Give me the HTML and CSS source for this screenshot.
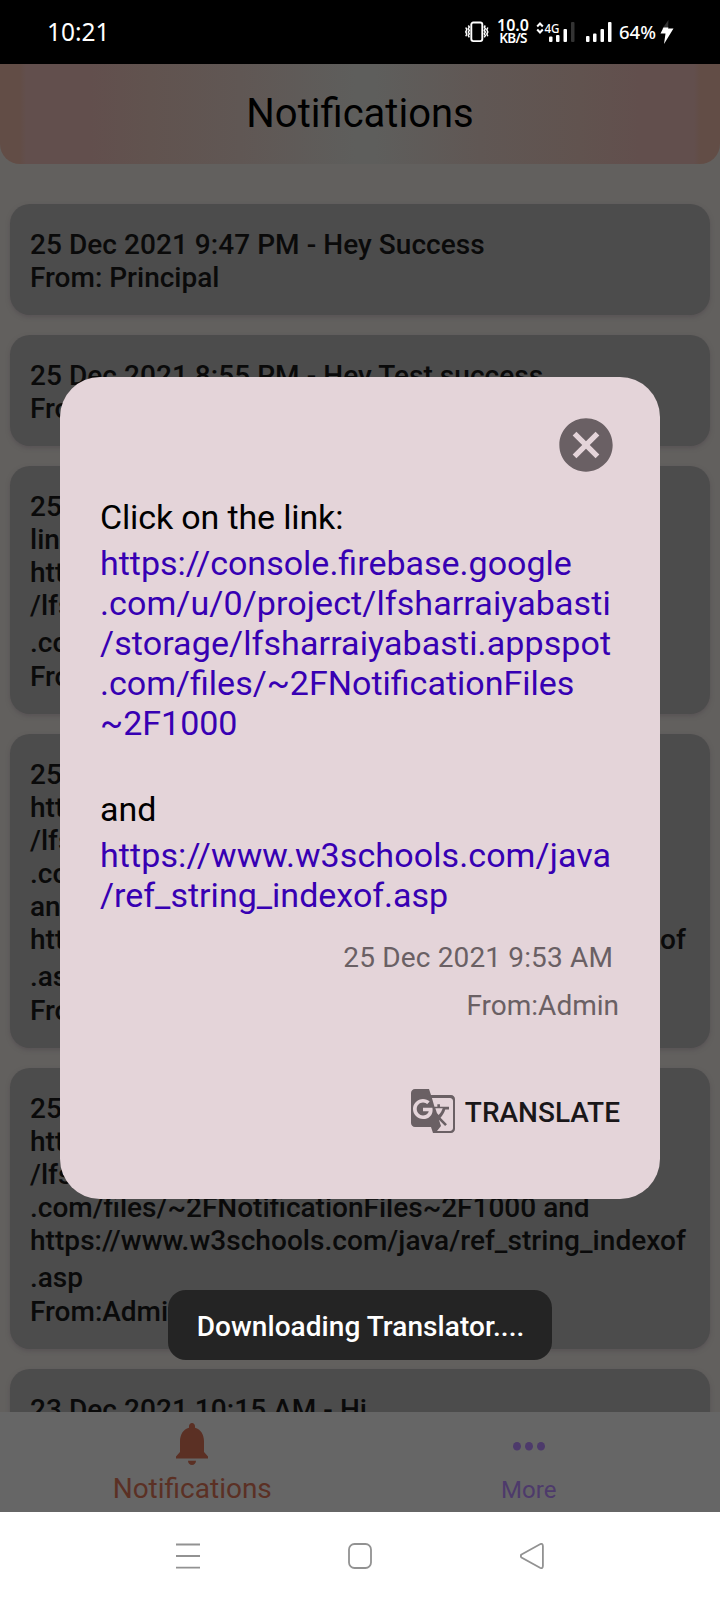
FILE: index.html
```html
<!DOCTYPE html>
<html lang="en">
<head>
<meta charset="utf-8">
<title>Notifications</title>
<link rel="stylesheet" href="styles.css">
</head>
<body>
<div class="phone">
  <div class="status">
    <span class="time">10:21</span>
    <div class="status-icons">
      <svg class="vibrate" width="24" height="22" viewBox="0 0 24 22" fill="none" stroke="#fff">
        <rect x="6.300" y="1.500" width="11" height="18.600" rx="2" stroke-width="1.900"/>
        <path stroke-width="1.500" d="M3.300 4.500l1 1.500-1 1.700 1 1.700-1 1.700 1 1.700-1 1.700 1 1.800M.8 6.500l1 2.200-1 2.200 1 2.200-1 2.200M20.300 4.500l-1 1.500 1 1.700-1 1.700 1 1.700-1 1.700 1 1.700-1 1.800M22.800 6.500l-1 2.200 1 2.200-1 2.200 1 2.200"/>
      </svg>
      <div class="speed"><span class="rate">10.0</span><span class="unit">KB/S</span></div>
      <svg class="sim1" width="40" height="22" viewBox="0 0 40 22">
        <path d="M1.200 5.500L4 2.500l2.800 3M1.200 8.500l2.800 3 2.800-3" fill="none" stroke="#fff" stroke-width="2"/>
        <text class="net" x="8.500" y="12" textLength="15" lengthAdjust="spacingAndGlyphs">4G</text>
        <g fill="#fff"><rect x="13" y="15.500" width="3.500" height="5.500" rx="1"/><rect x="20" y="14" width="3.500" height="7" rx="1"/><rect x="27.500" y="8" width="3.500" height="13" rx="1"/><rect x="35" y="1" width="3.500" height="20" rx="1" opacity=".2"/></g>
      </svg>
      <svg class="sim2" width="28" height="22" viewBox="0 0 28 22" fill="#fff">
        <rect x="1" y="15" width="3.500" height="6" rx="1"/><rect x="8" y="12.500" width="3.500" height="8.500" rx="1"/><rect x="15.500" y="8" width="3.500" height="13" rx="1"/><rect x="23" y="1" width="3.500" height="20" rx="1"/>
      </svg>
      <span class="battery">64%</span>
      <svg class="bolt" width="14" height="24" viewBox="0 0 14 24"><path d="M8.500 0L2 9h6z" fill="#333"/><path d="M3.500 7.500L.5 13.500h5L4 24l9.500-15.500H8l.5-1z" fill="#fff"/></svg>
    </div>
  </div>

  <div class="app">
    <header class="header"><h1 class="title">Notifications</h1></header>
    <main class="list">
      <article class="card"><p class="wide">25 Dec 2021 9:47 PM - Hey Success</p><p>From: Principal</p></article>
      <article class="card"><p class="wide">25 Dec 2021 8:55 PM - Hey Test success</p><p>From: Principal</p></article>
      <article class="card">
        <p>25 Dec 2021 9:53 AM - Click on the</p><p>link:</p><p>https://console.firebase.google.com/u/0</p><p>/lfsharraiyabasti.appspot</p><p class="tail">.com/files/~2F1000</p><p>From:Admin</p>
      </article>
      <article class="card">
        <p>25 Dec 2021 9:53 AM - Click on the link:</p><p>https://console.firebase.google.com/u/0</p><p>/lfsharraiyabasti.appspot</p><p>.com/files/~2F1000</p><p>and</p><p class="wide">https://www.w3schools.com/java/ref_string_indexof</p><p class="tail">.asp</p><p>From:Admin</p>
      </article>
      <article class="card">
        <p>25 Dec 2021 9:50 AM - Click on the link:</p><p>https://console.firebase.google.com/u/0</p><p>/lfsharraiyabasti.appspot</p><p>.com/files/~2FNotificationFiles~2F1000 and</p><p class="wide">https://www.w3schools.com/java/ref_string_indexof</p><p class="tail">.asp</p><p>From:Admin</p>
      </article>
      <article class="card"><p class="wide">23 Dec 2021 10:15 AM - Hi</p><p>From:Admin</p></article>
    </main>
    <nav class="tabs">
      <div class="tab active">
        <svg width="32" height="42" viewBox="4 2.500 16 19.500" preserveAspectRatio="none" fill="currentColor"><path d="M12 22c1.100 0 2-.9 2-2h-4c0 1.100.89 2 2 2zm6-6v-5c0-3.070-1.640-5.640-4.500-6.320V4c0-.83-.67-1.500-1.500-1.500s-1.500.67-1.500 1.500v.68C7.630 5.360 6 7.920 6 11v5l-2 2v1h16v-1l-2-2z"/></svg>
        <span>Notifications</span>
      </div>
      <div class="tab more">
        <svg width="32" height="42" viewBox="0 0 32 42" fill="currentColor"><ellipse cx="4" cy="23.300" rx="4" ry="4.300"/><ellipse cx="16" cy="23.300" rx="4" ry="4.300"/><ellipse cx="28" cy="23.300" rx="4" ry="4.300"/></svg>
        <span>More</span>
      </div>
    </nav>
  </div>

  <div class="system">
    <svg width="24" height="26" viewBox="0 0 24 26"><path d="M0 1.500h24M0 13h24M0 24.700h24"/></svg>
    <svg width="24" height="26" viewBox="0 0 24 26"><rect x="1" y="1" width="22" height="24" rx="5.500"/></svg>
    <svg width="24" height="26" viewBox="0 0 24 26"><path d="M1.500 11.500L20 1.200Q22.700 0 22.900 3v20Q22.700 26 20 24.800L1.500 14.500Q0 13 1.500 11.500z"/></svg>
  </div>

  <section class="dialog">
    <svg class="close" width="64" height="64" viewBox="0 0 24 24"><path d="M12 2C6.470 2 2 6.470 2 12s4.470 10 10 10 10-4.470 10-10S17.530 2 12 2zm5 13.590L15.590 17 12 13.410 8.410 17 7 15.590 10.590 12 7 8.410 8.410 7 12 10.590 15.590 7 17 8.410 13.410 12 17 15.590z"/></svg>
    <div class="message">
      <p class="intro">Click on the link:</p>
      <a class="link">https://console.firebase.google<br><span class="stretch">.com/u/0/project/lfsharraiyabasti</span><br><span class="stretch">/storage/lfsharraiyabasti.appspot</span><br>.com/files/~2FNotificationFiles<br>~2F1000</a>
      <p class="and">and</p>
      <a class="link"><span class="stretch">https://www.w3schools.com/java</span><br>/ref_string_indexof.asp</a>
    </div>
    <p class="date">25 Dec 2021 9:53 AM</p>
    <p class="from">From:Admin</p>
    <div class="translate">
      <svg width="48" height="48" viewBox="0 0 24 24"><path fill-rule="evenodd" d="M21 4H11l-1-3H3C1.900 1 1 1.900 1 3v15c0 1.100.9 2 2 2h8l1 3h9c1.100 0 2-.9 2-2V6c0-1.100-.9-2-2-2zM7 16c-2.760 0-5-2.240-5-5s2.240-5 5-5c1.350 0 2.480.5 3.350 1.300L9.030 8.570C8.650 8.210 7.980 7.780 7 7.780c-1.730 0-3.140 1.430-3.140 3.220S5.270 14.220 7 14.220c2 0 2.750-1.440 2.860-2.090H7v-1.710h4.680c.07.31.12.61.12 1.020C11.800 14.120 9.890 16 7 16zM13.170 10.580h3.700c-.43 1.250-1.110 2.430-2.050 3.470-.31-.35-.6-.72-.86-1.100zM22 20.500c0 .83-.67 1.500-1.500 1.500H14l2-2.500-1.040-3.100 3.100 3.100.92-.92-3.220-3.220.03-.03c1.100-1.220 1.880-2.620 2.340-4.100H20v-1.300h-4.530V8.600h-1.290v1.290h-1.440L11.460 5.500h9.040c.83 0 1.500.67 1.500 1.500z"/></svg>
      <span>TRANSLATE</span>
    </div>
  </section>
  <div class="toast">Downloading Translator....</div>
</div>
</body>
</html>
```
FILE: styles.css
```css
* { box-sizing: border-box; margin: 0; padding: 0; }
body { background: #fff; font-family: Roboto, "Liberation Sans", sans-serif; }
.phone { position: relative; width: 720px; height: 1600px; display: flex; flex-direction: column; overflow: hidden; }

.status { height: 64px; flex: none; background: #000; color: #fff; display: flex; justify-content: space-between; align-items: center; padding: 0 45px 0 47px; font-family: "Noto Sans", sans-serif; }
.time { font-size: 24.5px; line-height: 34px; padding-bottom: 1px; }
.status-icons { display: flex; align-items: center; }
.speed { display: flex; flex-direction: column; align-items: center; width: 34px; margin-left: 7px; font-weight: 600; white-space: nowrap; }
.rate { font-size: 16px; line-height: 13px; }
.unit { font-size: 13.5px; line-height: 13px; letter-spacing: -.7px; }
.sim1 { margin-left: 6px; overflow: visible; }
.sim2 { margin-left: 9px; }
.net { font-family: "Noto Sans", sans-serif; font-size: 13px; font-weight: 500; fill: #fff; }
.battery { font-size: 18.5px; font-weight: 500; line-height: 26px; width: 39px; margin-left: 6px; }
.bolt { margin: 0 1px 0 2px; }

.app { height: 1448px; flex: none; display: flex; flex-direction: column; overflow: hidden; background: #62605e; }
.header { height: 100px; flex: none; border-radius: 0 0 20px 20px; background: linear-gradient(90deg, #624d46 0, #624d46 20px, #624f4d 26px, #624f4d 90px, #61534f 150px, #605754 240px, #5e5e5c 355px, #5e5e5c 375px, #605754 480px, #61534f 580px, #624f4d 640px, #624f4d 694px, #624d46 700px); display: flex; justify-content: center; padding-top: 26px; }
.title { font-size: 40px; line-height: 47px; font-weight: 400; color: #000; }
.list { flex: 1; min-height: 0; overflow: hidden; padding: 40px 10px 0; display: flex; flex-direction: column; gap: 20px; }
.card { flex: none; padding: 24px 20px 21px; border-radius: 20px; background: #4c4c4c; box-shadow: 0 2px 4px rgba(80, 74, 78, .6); color: #0a0a0a; font-size: 28px; line-height: 33px; font-weight: 500; white-space: nowrap; }
.wide { letter-spacing: .05px; }
.tail { padding: 4px 0 1px; }
.tabs { height: 100px; flex: none; background: #666; display: flex; padding: 11px 22px 0; }
.tab { flex: 1; display: flex; flex-direction: column; align-items: center; }
.tab span { line-height: 33px; margin-top: 7px; }
.active { color: #5b3024; font-size: 28px; padding-left: 2px; }
.more { color: #4d3a6b; font-size: 24px; padding-right: 1px; }
.tab.more span { margin-top: 9px; }

.system { height: 88px; flex: none; background: #fff; display: flex; justify-content: space-between; align-items: center; padding: 0 176px; }
.system svg { fill: none; stroke: #929292; stroke-width: 1.8; }

.dialog { position: absolute; left: 60px; top: 377px; width: 600px; height: 822px; border-radius: 40px; background: #e4d4d9; padding: 36px 40px 0; display: flex; flex-direction: column; }
.close { flex: none; align-self: flex-end; margin-right: 2px; fill: #6a6064; }
.message { font-size: 34px; line-height: 40px; color: #000; padding-top: 20px; white-space: nowrap; }
.intro { letter-spacing: -.14px; }
.link { display: block; margin-top: 6px; color: #3700b3; }
.stretch { letter-spacing: .1px; }
.and { margin-top: 46px; }
.date, .from { align-self: flex-end; font-size: 28px; line-height: 33px; color: #6a6064; }
.date { margin: 26px 7px 0 0; letter-spacing: .15px; }
.from { margin: 15px 1px 0 0; }
.translate { display: flex; align-items: center; align-self: flex-end; gap: 8px; height: 48px; margin-top: 65px; font-size: 28px; font-weight: 500; color: #1a1719; }
.translate svg { fill: #6a6064; }
.translate span { padding-top: 2px; }

.toast { position: absolute; left: 168px; top: 1290px; width: 384px; height: 70px; border-radius: 18px; background: #242424; color: #fff; font-size: 28px; font-weight: 500; line-height: 73px; letter-spacing: .06px; padding-left: 1px; text-align: center; white-space: nowrap; }
```
